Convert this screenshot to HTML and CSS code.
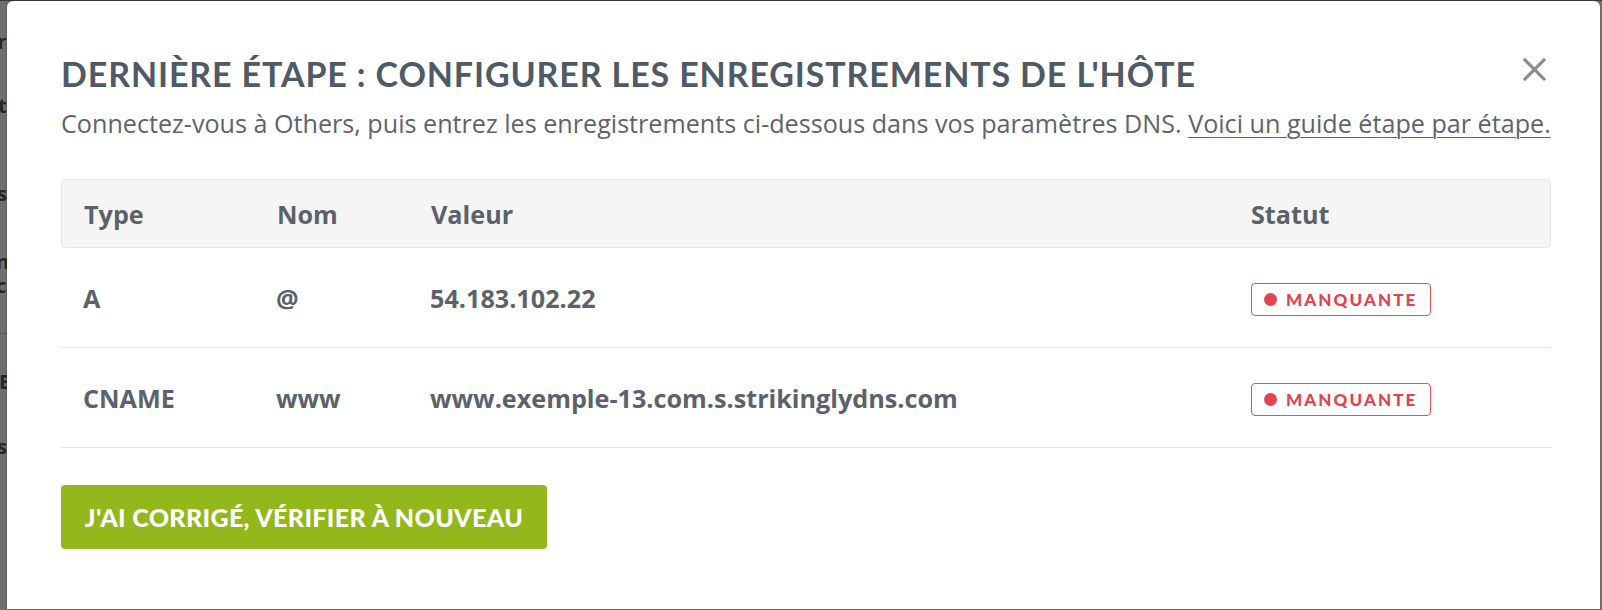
FILE: index.html
```html
<!DOCTYPE html>
<html lang="fr">
<head>
<meta charset="utf-8">
<title>Configurer les enregistrements de l'hôte</title>
<link rel="stylesheet" href="styles.css">
</head>
<body>
<div class="page">
  <div class="behind">
    <span class="frag f1">r</span>
    <span class="frag f2">t</span>
    <span class="frag f3">s</span>
    <span class="frag f4">n</span>
    <span class="frag f5">c</span>
    <span class="rule"></span>
    <span class="frag f6">E</span>
    <span class="frag f7">s</span>
  </div>
  <div class="modal">
    <div class="head">
      <h1 class="title">DERNIÈRE ÉTAPE : CONFIGURER LES ENREGISTREMENTS DE L'HÔTE</h1>
      <button class="close" aria-label="Fermer">
        <svg width="28" height="28" viewBox="0 0 28 28"><path d="M3 3 L25 25 M25 3 L3 25" stroke="#8c8c8c" stroke-width="3.2" stroke-linecap="butt" fill="none"/></svg>
      </button>
    </div>
    <p class="intro">Connectez-vous à Others, puis entrez les enregistrements ci-dessous dans vos paramètres DNS. <a href="#" class="guide">Voici un guide étape par étape.</a></p>
    <div class="table">
      <div class="thead grid">
        <div>Type</div><div>Nom</div><div>Valeur</div><div>Statut</div>
      </div>
      <div class="row grid">
        <div>A</div><div>@</div><div>54.183.102.22</div>
        <div><span class="badge"><span class="dot"></span>MANQUANTE</span></div>
      </div>
      <div class="row grid">
        <div>CNAME</div><div>www</div><div>www.exemple-13.com.s.strikinglydns.com</div>
        <div><span class="badge"><span class="dot"></span>MANQUANTE</span></div>
      </div>
    </div>
    <button class="verify">J'AI CORRIGÉ, VÉRIFIER À NOUVEAU</button>
  </div>
</div>
</body>
</html>
```
FILE: styles.css
```css
html, body {
  margin: 0;
  padding: 0;
  height: 100%;
  overflow: hidden;
}
body {
  background: #6f6f6f;
  font-family: "Open Sans", "Liberation Sans", sans-serif;
}
.page {
  display: flex;
  padding-top: 1px;
  height: 609px;
  box-sizing: border-box;
  background: linear-gradient(#3a3a3a 0 1px, #6f6f6f 1px);
}
.behind {
  width: 7px;
  flex: none;
  overflow: hidden;
  display: flex;
  flex-direction: column;
  color: #262626;
  font-weight: 700;
  font-size: 20px;
  line-height: 20px;
}
.frag { display: block; height: 20px; }
.f1 { margin-top: 31px; text-indent: -2px; font-weight: 600; }
.f2 { margin-top: 44px; text-indent: -2px; }
.f3 { margin-top: 68px; text-indent: -3px; }
.f4 { margin-top: 48px; text-indent: -4px; }
.f5 { margin-top: 4px; text-indent: -4px; }
.rule { display: block; height: 1px; background: #5c5c5c; margin-top: 37px; }
.f6 { margin-top: 38px; text-indent: -1px; }
.f7 { margin-top: 45px; text-indent: -3px; }

.modal {
  flex: 1;
  margin-right: 2px;
  background: #fff;
  border-radius: 6px 6px 0 0;
  padding: 0 49px 0 54px;
  box-shadow: -1px 0 2px rgba(0,0,0,0.15);
}
.head {
  display: flex;
  align-items: center;
  justify-content: space-between;
  height: 70px;
  padding-top: 37px;
}
.title {
  margin: 0;
  font-family: "Lato", "Liberation Sans", sans-serif;
  font-weight: 700;
  font-size: 34px;
  letter-spacing: 0.87px;
  color: #4e5a65;
}
.close {
  border: 0;
  background: none;
  padding: 0;
  margin: -8px 3px 0 0;
  width: 27px;
  height: 27px;
  display: flex;
}
.close svg { width: 27px; height: 27px; }
.intro {
  margin: 0;
  padding-top: 1px;
  font-size: 25.15px;
  line-height: 28px;
  color: #5d646d;
}
.guide {
  color: #5d646d;
  text-decoration: underline;
  text-decoration-thickness: 1px;
  text-underline-offset: 4px;
}
.table {
  margin-top: 42px;
}
.grid {
  display: grid;
  grid-template-columns: 193px 154px 820px 1fr;
  align-items: center;
  padding-left: 22px;
  font-weight: 700;
  color: #5b626c;
  font-size: 25.2px;
}
.thead {
  height: 67px;
  background: #f5f5f5;
  border: 1px solid #e6e6e6;
  border-radius: 4px;
}
.row {
  height: 99px;
  border-bottom: 1px solid #e3e3e3;
}
.badge {
  display: inline-flex;
  align-items: center;
  height: 33px;
  box-sizing: border-box;
  padding: 0 13px 0 12px;
  margin-left: 1px;
  border: 1px solid #e0505a;
  border-radius: 4px;
  color: #e0434f;
  font-family: "Lato", "Liberation Sans", sans-serif;
  font-weight: 900;
  font-size: 17px;
  letter-spacing: 2.1px;
}
.dot {
  width: 13px;
  height: 13px;
  border-radius: 50%;
  background: #e3444f;
  margin-right: 9px;
}
.verify {
  margin-top: 37px;
  width: 486px;
  height: 64px;
  border: 0;
  border-radius: 4px;
  background: #93b81b;
  color: #fff;
  font-family: "Lato", "Liberation Sans", sans-serif;
  font-weight: 900;
  font-size: 25px;
  letter-spacing: 0.35px;
  padding: 0;
}
```
